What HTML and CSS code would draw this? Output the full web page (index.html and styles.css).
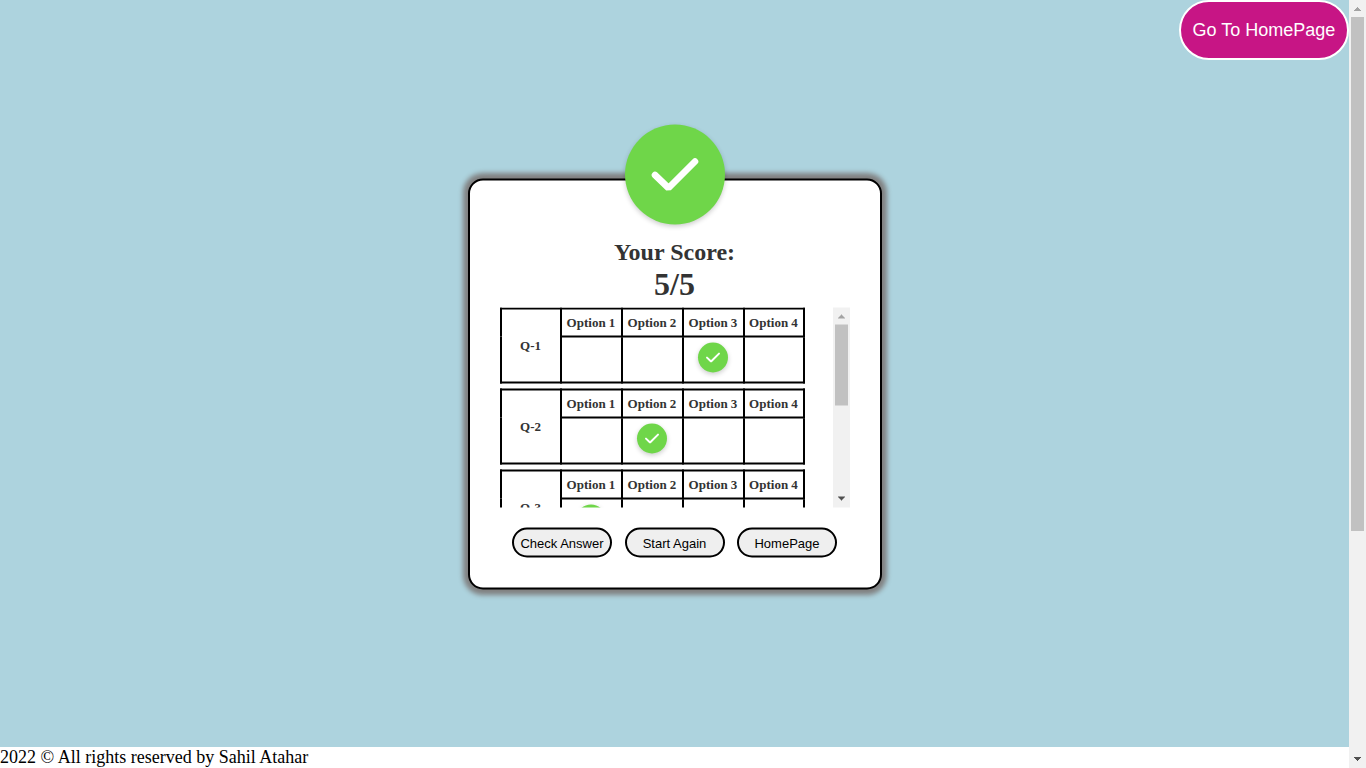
FILE: index.html
```html
<!DOCTYPE html>
<html lang="en">
<head>
<meta charset="utf-8">
<meta name="viewport" content="width=device-width, initial-scale=1">
<title>Quiz Result</title>
<link rel="stylesheet" href="styles.css">
</head>
<body>
<svg class="symbols" aria-hidden="true">
  <symbol id="tick" viewBox="0 0 100 100"><path d="M30 50.500 L43.500 63.500 L70 37" fill="none" stroke="#fff" stroke-width="6.600" stroke-linecap="round" stroke-linejoin="bevel"/></symbol>
</svg>
<div class="page">
  <main class="stage">
    <button type="button" class="home-button">Go To HomePage</button>
  </main>
  <section class="popup" aria-labelledby="score-title">
    <div class="badge"><svg><use href="#tick"/></svg></div>
    <h2 id="score-title" class="score-title">Your Score:</h2>
    <p class="score">5/5</p>
    <div class="results">
      <div class="answers">
        <table class="answer">
          <colgroup><col class="col-edge"><col class="col-option"><col class="col-option"><col class="col-option"><col class="col-edge"></colgroup>
          <tr><th rowspan="2">Q-1</th><th>Option 1</th><th>Option 2</th><th>Option 3</th><th>Option 4</th></tr>
          <tr class="marks"><td></td><td></td><td><div class="mark"><svg><use href="#tick"/></svg></div></td><td></td></tr>
        </table>
        <table class="answer">
          <colgroup><col class="col-edge"><col class="col-option"><col class="col-option"><col class="col-option"><col class="col-edge"></colgroup>
          <tr><th rowspan="2">Q-2</th><th>Option 1</th><th>Option 2</th><th>Option 3</th><th>Option 4</th></tr>
          <tr class="marks"><td></td><td><div class="mark"><svg><use href="#tick"/></svg></div></td><td></td><td></td></tr>
        </table>
        <table class="answer">
          <colgroup><col class="col-edge"><col class="col-option"><col class="col-option"><col class="col-option"><col class="col-edge"></colgroup>
          <tr><th rowspan="2">Q-3</th><th>Option 1</th><th>Option 2</th><th>Option 3</th><th>Option 4</th></tr>
          <tr class="marks"><td><div class="mark"><svg><use href="#tick"/></svg></div></td><td></td><td></td><td></td></tr>
        </table>
      </div>
      <div class="scrollbar" aria-hidden="true">
        <svg class="arrow arrow-off" viewBox="0 0 17 17"><path d="M5 11h7v-1h-1v-1h-1v-1h-1v-1h-1v1h-1v1h-1v1h-1z"/></svg>
        <div class="track"><div class="thumb thumb-half"></div></div>
        <svg class="arrow" viewBox="0 0 17 17"><path d="M5 6h7v1h-1v1h-1v1h-1v1h-1v-1h-1v-1h-1v-1h-1z"/></svg>
      </div>
    </div>
    <div class="actions">
      <button type="button" class="action">Check Answer</button>
      <button type="button" class="action">Start Again</button>
      <button type="button" class="action">HomePage</button>
    </div>
  </section>
  <footer class="footer">2022 © All rights reserved by Sahil Atahar</footer>
</div>
<div class="scrollbar" aria-hidden="true">
  <svg class="arrow arrow-off" viewBox="0 0 17 17"><path d="M5 11h7v-1h-1v-1h-1v-1h-1v-1h-1v1h-1v1h-1v1h-1z"/></svg>
  <div class="track"><div class="thumb"></div></div>
  <svg class="arrow" viewBox="0 0 17 17"><path d="M5 6h7v1h-1v1h-1v1h-1v1h-1v-1h-1v-1h-1v-1h-1z"/></svg>
</div>
</body>
</html>
```
FILE: styles.css
```css
* {
  box-sizing: border-box;
}

body {
  margin: 0;
  display: flex;
  height: 100vh;
  overflow: hidden;
  background: #fff;
  font-family: "Liberation Serif", "Times New Roman", serif;
}

.symbols {
  position: absolute;
  width: 0;
  height: 0;
}

.page {
  position: relative;
  flex: 1;
  min-width: 0;
  display: flex;
  flex-direction: column;
}

.stage {
  flex: 1;
  display: flex;
  align-items: flex-start;
  justify-content: flex-end;
  background: #add3de;
}

.home-button {
  width: 170px;
  height: 60px;
  padding: 0;
  border: 2px solid #fff;
  border-radius: 30px;
  background: #c71585;
  color: #fff;
  font: 18px "Liberation Sans", Arial, sans-serif;
}

.footer {
  font-size: 18px;
  line-height: 21px;
}

/* Result dialog, centred over the page */
.popup {
  position: absolute;
  top: 50%;
  left: 50%;
  transform: translate(-50%, -50%);
  display: flex;
  flex-direction: column;
  align-items: center;
  width: 414px;
  padding: 0 30px 30px;
  border: 2px solid #000;
  border-radius: 15px;
  background: #fff;
  box-shadow: 0 0 5px 5px #808080;
  color: #333;
}

.badge,
.mark {
  border-radius: 50%;
  background: #6fd649;
  box-shadow: 0 2px 5px rgba(0, 0, 0, 0.2);
}

.badge {
  width: 100px;
  height: 100px;
  margin: -56px 0 13px;
}

.badge svg,
.mark svg {
  display: block;
  width: 100%;
  height: 100%;
}

.score-title {
  margin: 0;
  font-size: 24px;
  line-height: 28px;
}

.score {
  margin: 0 0 6px;
  font-size: 32px;
  font-weight: bold;
  line-height: 36px;
}

.results {
  display: flex;
  justify-content: space-between;
  width: 100%;
  height: 200px;
}

.answers {
  overflow: hidden;
}

.answer {
  table-layout: fixed;
  width: 305px;
  margin-bottom: 5px;
  border-collapse: collapse;
  font-size: 13px;
  line-height: 16px;
}

.col-edge {
  width: 60px;
}

.col-option {
  width: 61px;
}

.answer th,
.answer td {
  height: 28px;
  padding: 0;
  border: 2px solid #000;
}

.answer .marks td {
  height: 46px;
}

.mark {
  width: 30px;
  height: 30px;
  margin: 0 auto 4px;
}

.actions {
  display: flex;
  justify-content: space-evenly;
  width: 100%;
  margin-top: 20px;
}

.action {
  width: 100px;
  height: 30px;
  padding: 0;
  border: 2px solid #000;
  border-radius: 15px;
  background: #efefef;
  color: #000;
  font: 13px "Liberation Sans", Arial, sans-serif;
}

.scrollbar {
  display: flex;
  flex-direction: column;
  width: 17px;
  background: #f1f1f1;
}

.arrow {
  width: 17px;
  height: 17px;
  fill: #505050;
}

.arrow-off {
  fill: #a3a3a3;
}

.track {
  flex: 1;
  padding: 0 2px;
}

.thumb {
  height: 70%;
  background: #c1c1c1;
}

.thumb-half {
  height: 49%;
}
```
